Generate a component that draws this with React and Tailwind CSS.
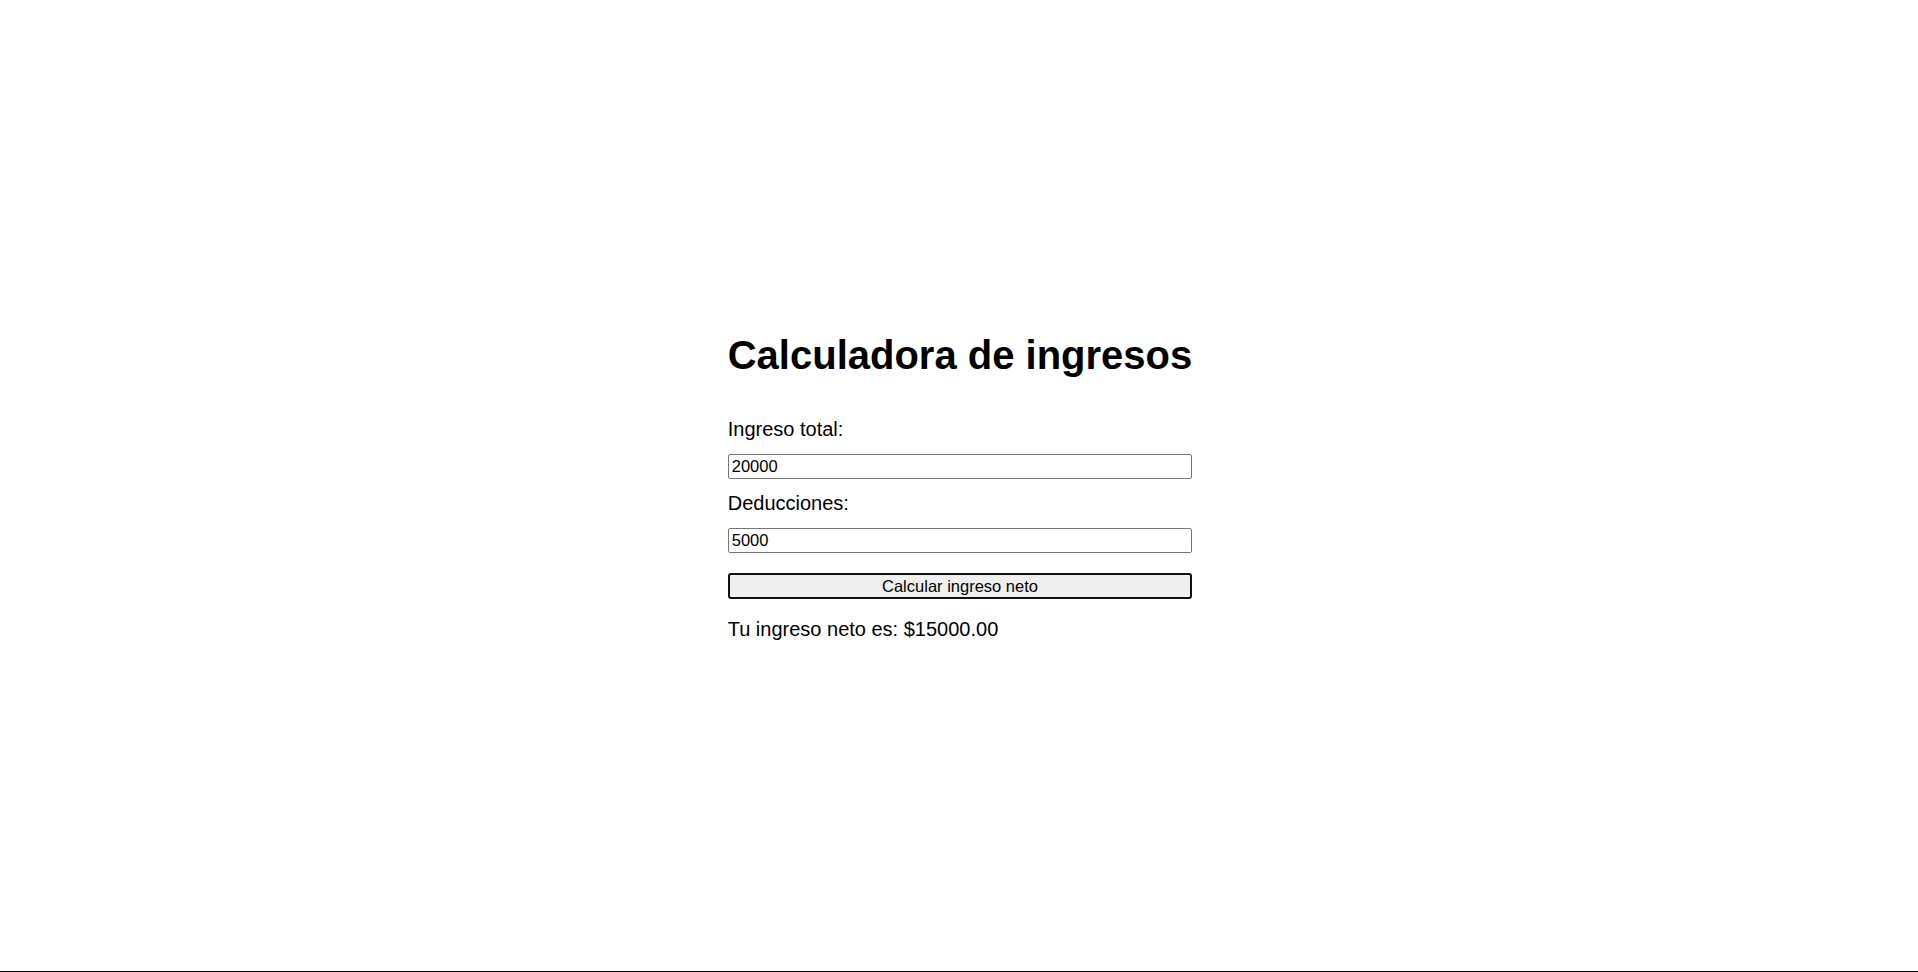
import { useState } from "react";

// Calculadora de ingresos netos
function App() {
  const [ingreso, setIngreso] = useState("20000");
  const [deducciones, setDeducciones] = useState("5000");
  const [neto, setNeto] = useState(15000);

  const calcular = () => {
    const total = parseFloat(ingreso) || 0;
    const ded = parseFloat(deducciones) || 0;
    setNeto(total - ded);
  };

  return (
    <div className="min-h-screen flex items-center justify-center bg-white border-b border-black pt-[2px] pl-[2px] font-['Liberation_Sans',Arial,sans-serif] text-black">
      <div className="w-fit">
        <h1 className="text-[40px] leading-[46px] font-bold">Calculadora de ingresos</h1>

        <label className="block mt-[40px] text-[20px] leading-[23px]">Ingreso total:</label>
        <input
          type="text"
          value={ingreso}
          onChange={(e) => setIngreso(e.target.value)}
          className="block w-full mt-[13px] h-[25px] border border-[#767676] rounded-[2px] pl-[3px] pr-[2px] text-[16.5px] leading-[19px] outline-none"
        />

        <label className="block mt-[13px] text-[20px] leading-[23px]">Deducciones:</label>
        <input
          type="text"
          value={deducciones}
          onChange={(e) => setDeducciones(e.target.value)}
          className="block w-full mt-[13px] h-[25px] border border-[#767676] rounded-[2px] pl-[3px] pr-[2px] text-[16.5px] leading-[19px] outline-none"
        />

        <button
          onClick={calcular}
          className="block w-full mt-[20px] h-[26px] border-2 border-[#101010] rounded-[3px] bg-[#efefef] text-[16.5px] leading-[19px] text-black"
        >
          Calcular ingreso neto
        </button>

        <p className="mt-[19px] text-[20px] leading-[23px]">Tu ingreso neto es: ${neto.toFixed(2)}</p>
      </div>
    </div>
  );
}

export default App;
